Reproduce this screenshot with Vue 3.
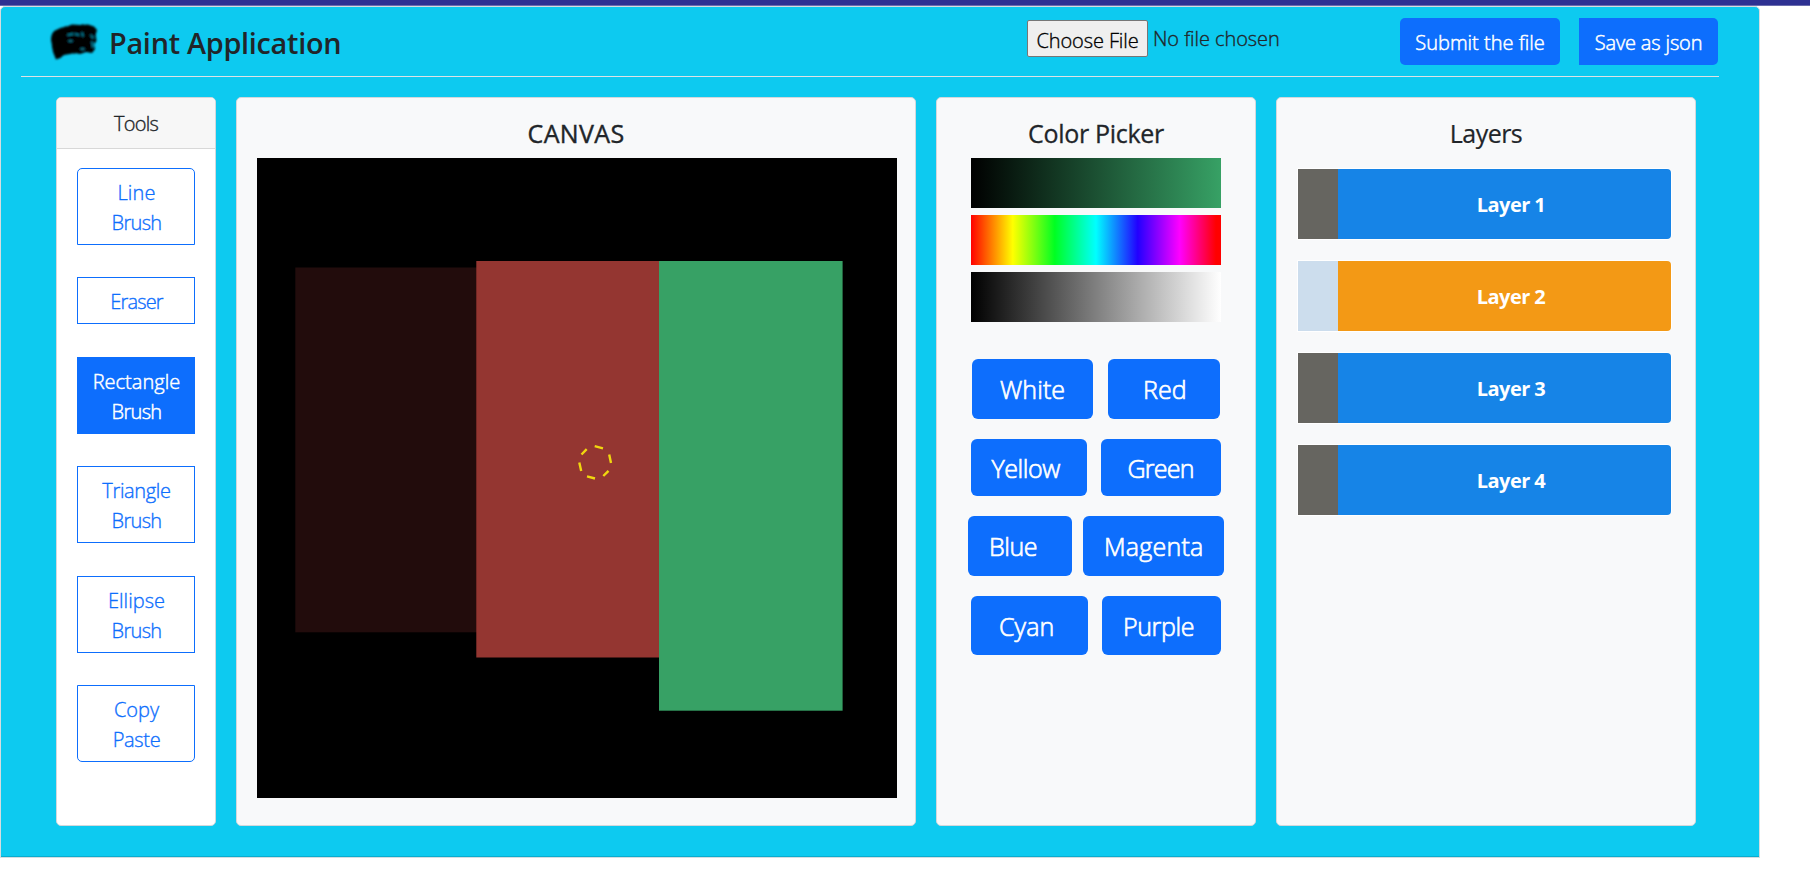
<script setup>
const tools = [
  { lines: [['Line', 0.14], ['Brush', -0.69]], gap: 0 },
  { lines: [['Eraser', -0.81]], gap: 32 },
  { lines: [['Rectangle', 0.04], ['Brush', -0.69]], gap: 33, active: true },
  { lines: [['Triangle', -0.34], ['Brush', -0.69]], gap: 32 },
  { lines: [['Ellipse', 0.03], ['Brush', -0.69]], gap: 33 },
  { lines: [['Copy', 0], ['Paste', -0.33]], gap: 32 },
]

const swatches = [
  { h: 60, gap: 15, items: [['White', 121, 28, 0.06], ['Red', 112, 35, 0.1]] },
  { h: 57, gap: 14, items: [['Yellow', 116, 20.5, -0.44], ['Green', 120, 26.5, -0.74]] },
  { h: 60, gap: 11, items: [['Blue', 104, 21, -0.46], ['Magenta', 141, 21, 0.22]] },
  { h: 59, gap: 14, items: [['Cyan', 117, 28, 0.1], ['Purple', 119, 21, -0.4]] },
]

const layers = [1, 2, 3, 4]
const activeLayer = 2
</script>

<template>
  <div class="page">
    <div class="topbar"></div>
    <main class="app-card">
      <header class="header">
        <svg class="logo" width="54" height="44" viewBox="0 0 54 44">
          <defs>
            <filter id="soft" x="-10%" y="-10%" width="120%" height="120%">
              <feTurbulence type="fractalNoise" baseFrequency="0.35" numOctaves="2" seed="4" result="noise" />
              <feDisplacementMap in="SourceGraphic" in2="noise" scale="2" xChannelSelector="R" yChannelSelector="G" result="rough" />
              <feGaussianBlur in="rough" stdDeviation="0.9" />
            </filter>
          </defs>
          <g filter="url(#soft)">
            <path d="M3 20 Q3 13 7 10.500 Q13 7 19 6.500 L24 4.500 L32 5 L40 4.500 L46 6.500 L49 10 L47.500 15 L48.500 21 L46 24 L47 29 L44 33 L38 32 L32 34 L27 33 L22 34 L16 35 L12 38 L8 39.500 L5 32 Z" fill="#000" />
            <path d="M20 15 l5 -1 M27 14 l4 1 M21 21 l3 0 M34 13 l1 3 M43 15 l2 3 M44 22 l1 5 M33 29 l3 0" stroke="#0a89a5" stroke-width="1.500" stroke-linecap="round" fill="none" />
          </g>
        </svg>
        <h1 class="title">Paint Application</h1>
        <div class="file">
          <button class="file-btn">Choose File</button>
          <span class="file-name">No file chosen</span>
        </div>
        <button class="btn submit">Submit the file</button>
        <button class="btn save">Save as json</button>
      </header>

      <div class="columns">
        <section class="panel tools">
          <div class="tools-head">Tools</div>
          <div class="tools-list">
            <button v-for="(t, i) in tools" :key="i" class="tool" :class="{ active: t.active }" :style="{ marginTop: t.gap + 'px' }">
              <span v-for="l in t.lines" :key="l[0]" class="tool-line" :style="{ letterSpacing: l[1] + 'px' }">{{ l[0] }}</span>
            </button>
          </div>
        </section>

        <section class="panel canvas-panel">
          <h2 class="heading canvas-heading">CANVAS</h2>
          <svg class="canvas" width="640" height="640" viewBox="0 0 640 640">
            <rect width="640" height="640" fill="#000" />
            <rect x="38.3" y="109.500" width="182" height="364.800" fill="#220c0c" />
            <rect x="219.300" y="103" width="183" height="396.500" fill="#943631" />
            <rect x="402" y="103" width="183.600" height="449.700" fill="#37a165" />
            <path d="M337.700 288.200 L346 290.300 M352.200 296.500 L354 305 M351.500 312.800 L346.300 318 M338 320.500 L330 318.400 M324.200 313 L322.300 304.500 M324.500 296.500 L329.700 291.200" stroke="#f0d70f" stroke-width="2.400" fill="none" />
          </svg>
        </section>

        <section class="panel picker">
          <h2 class="heading picker-heading">Color Picker</h2>
          <div class="bar shade"></div>
          <div class="bar hue"></div>
          <div class="bar light"></div>
          <div class="swatches">
            <div v-for="(row, i) in swatches" :key="i" class="swatch-row" :style="{ gap: row.gap + 'px', height: row.h + 'px' }">
              <button v-for="s in row.items" :key="s[0]" class="swatch" :style="{ width: s[1] + 'px', paddingLeft: s[2] + 'px', letterSpacing: s[3] + 'px' }">{{ s[0] }}</button>
            </div>
          </div>
        </section>

        <section class="panel layers">
          <h2 class="heading layers-heading">Layers</h2>
          <div v-for="n in layers" :key="n" class="layer" :class="{ current: n === activeLayer }">
            <span class="layer-check"></span>
            <span class="layer-name">Layer {{ n }}</span>
          </div>
        </section>
      </div>
    </main>
  </div>
</template>

<style>
body { margin: 0; background: #fff; overflow: hidden; }
</style>

<style scoped>
.page, .page * { box-sizing: border-box; }
.page { width: 1810px; height: 894px; font-family: "Open Sans", "Noto Sans", sans-serif; font-size: 20px; line-height: 30px; font-weight: 300; color: #212529; -webkit-text-stroke: 0.35px currentColor; }
button { font: inherit; margin: 0; padding: 0; border: 0; }
h1, h2 { margin: 0; }
.topbar { height: 6px; background: #2e3192; border-bottom: 1px solid #6a6cae; }
.app-card { width: 1760px; height: 852px; border: 1px solid #d5dde0; border-radius: 5px 5px 0 0; background: #0dcaf0; box-shadow: inset 0 -1px 0 #0bacce; }

.header { display: flex; align-items: flex-start; height: 70px; margin: 0 40px 0 20px; border-bottom: 1px solid #dee2e6; }
.logo { margin: 13px 0 0 27px; flex: none; }
.title { width: 240px; margin: 18px 0 0 7px; font-size: 28.800px; line-height: 36px; font-weight: 600; letter-spacing: -0.27px; white-space: nowrap; -webkit-text-stroke: 0; }
.file { display: flex; margin: 13px 0 0 678px; width: 260px; white-space: nowrap; }
.file-btn { width: 121px; height: 37px; border: 1px solid #767676; border-radius: 2px; background: #efefef; color: #000; letter-spacing: -0.1px; padding-top: 3px; line-height: 33px; }
.file-name { margin: 4px 0 0 5px; letter-spacing: -0.07px; }
.btn { height: 47px; margin-top: 11px; padding-top: 2px; background: #0d6efd; color: #fff; border-radius: 5px; white-space: nowrap; -webkit-text-stroke-width: 0.5px; }
.submit { width: 160px; margin-left: auto; }
.save { width: 139px; margin-left: 19px; margin-right: 1px; border-radius: 0 5px 5px 0; letter-spacing: -0.14px; }

.columns { display: flex; gap: 20px; padding: 20px 0 0 55px; }
.panel { height: 729px; border: 1px solid #d3d8dc; border-radius: 5px; background: #f8f9fa; flex: none; }
.tools { width: 160px; background: #fff; overflow: hidden; }
.tools-head { height: 51px; padding-top: 11px; text-align: center; background: #f7f7f7; border-bottom: 1px solid #d8d8d8; letter-spacing: -0.74px; }
.tools-list { display: flex; flex-direction: column; padding: 19px 20px 0; }
.tool { width: 118px; padding: 8.500px 0 6.500px 1px; display: flex; flex-direction: column; align-items: center; background: #fff; border: 1px solid #0d6efd; color: #0d6efd; }
.tool:first-child { border-radius: 5px 5px 0 0; }
.tool:last-child { border-radius: 0 0 5px 5px; }
.tool.active { background: #0d6efd; color: #fff; -webkit-text-stroke-width: 0.5px; }
.tool-line { display: block; }

.heading { font-size: 25px; line-height: 30px; font-weight: 500; text-align: center; -webkit-text-stroke: 0; }
.canvas-panel { width: 680px; padding: 20px 0 0 20px; }
.canvas-heading { width: 638px; letter-spacing: 0.350px; -webkit-text-stroke: 0.4px currentColor; }
.canvas { display: block; margin-top: 10px; }
.picker { width: 320px; padding-top: 20px; display: flex; flex-direction: column; align-items: center; }
.picker-heading { margin-bottom: 10px; letter-spacing: -0.3px; -webkit-text-stroke: 0.3px currentColor; }
.bar { width: 250px; height: 50px; margin-bottom: 7px; }
.shade { background: linear-gradient(90deg, #000, #37a165); }
.hue { background: linear-gradient(90deg, #f00 0, #ff0 16.7%, #0f2 33.5%, #0ff 50%, #20f 66.7%, #f0f 83.5%, #f00 98%); }
.light { background: linear-gradient(90deg, #000, #fff); }
.swatches { display: flex; flex-direction: column; align-items: center; gap: 20px; margin-top: 30px; }
.swatch-row { display: flex; }
.swatch { height: 100%; border-radius: 6px; background: #0d6efd; color: #fff; font-size: 25px; line-height: 38px; text-align: left; white-space: nowrap; -webkit-text-stroke-width: 0.7px; }

.layers { width: 420px; padding-top: 20px; }
.layers-heading { letter-spacing: -0.54px; margin-bottom: 20px; -webkit-text-stroke: 0.2px currentColor; }
.layer { display: flex; width: 375px; height: 72px; margin: 0 0 20px 20px; border: 1px solid #fff; border-radius: 0 5px 5px 0; overflow: hidden; }
.layer-check { width: 40px; background: #666560; }
.layer-name { flex: 1; padding: 21px 0 0 13px; background: #1684e7; color: #fff; text-align: center; font-weight: 700; letter-spacing: -0.56px; -webkit-text-stroke: 0; }
.current .layer-check { background: #ccdded; }
.current .layer-name { background: #f39915; }
</style>
